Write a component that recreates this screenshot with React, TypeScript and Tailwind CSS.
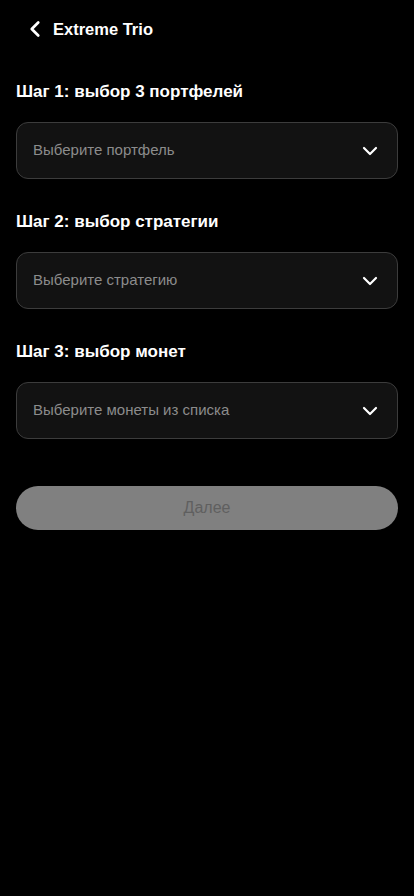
import { ChevronLeft, ChevronDown } from 'lucide-react';

const steps = [
  { title: 'Шаг 1: выбор 3 портфелей', placeholder: 'Выберите портфель' },
  { title: 'Шаг 2: выбор стратегии', placeholder: 'Выберите стратегию' },
  { title: 'Шаг 3: выбор монет', placeholder: 'Выберите монеты из списка' },
];

export default function App() {
  return (
    <div className="min-h-[896px] w-full bg-black text-white px-4" style={{ fontFamily: '"Liberation Sans", Arial, sans-serif' }}>
      <div className="flex items-center h-[58px] pl-[6px] gap-[5px]">
        <ChevronLeft className="w-[26px] h-[26px]" strokeWidth={2.5} />
        <span className="text-[16.5px] font-bold">Extreme Trio</span>
      </div>
      <div className="flex flex-col pt-[23px] gap-[32px]">
        {steps.map(s => (
          <div key={s.title} className="flex flex-col gap-[19px]">
            <h2 className="text-[17px] font-bold leading-[22px]">{s.title}</h2>
            <button className="flex items-center justify-between h-[57px] rounded-[12px] border border-[#3c3c3c] bg-[#121212] pl-[16px] pr-[15px] text-left">
              <span className="text-[15px] text-[#8c8c8c]">{s.placeholder}</span>
              <ChevronDown className="w-[24px] h-[24px] text-white" strokeWidth={2.2} />
            </button>
          </div>
        ))}
      </div>
      <button disabled className="mt-[47px] w-full h-[44px] rounded-full bg-[#808080] text-[16px] text-[#5f5f5f]">Далее</button>
    </div>
  );
}
